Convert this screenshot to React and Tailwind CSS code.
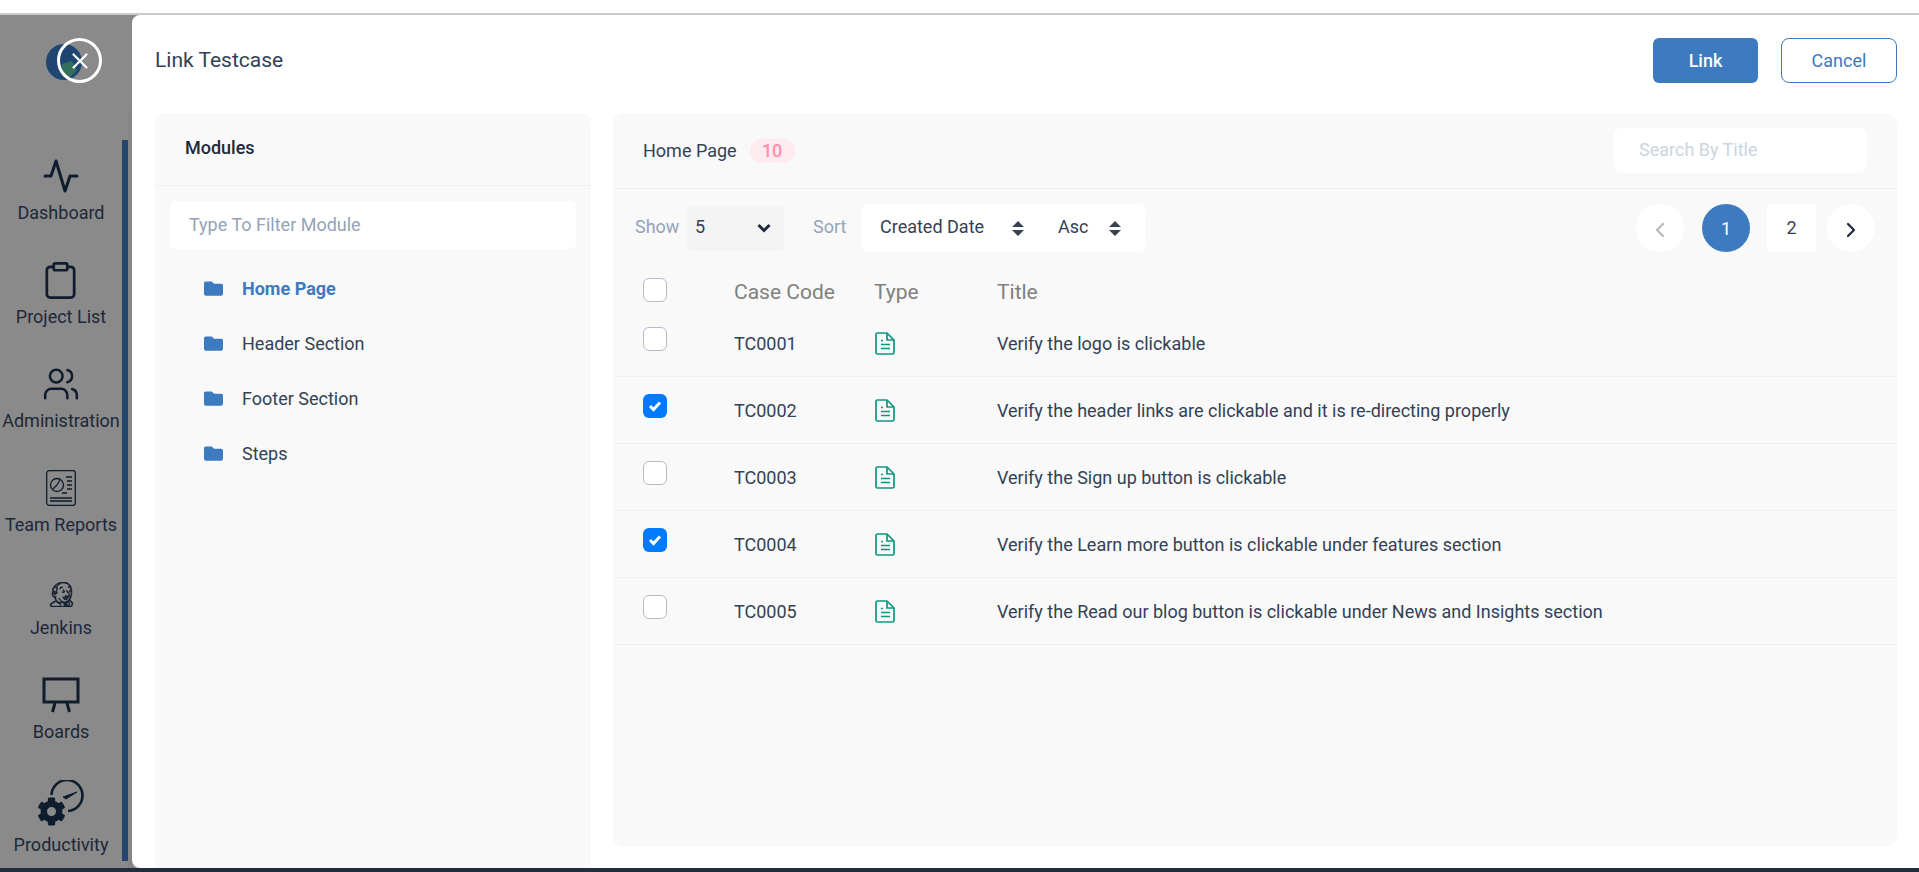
import React from 'react';
import { Clipboard, Users, ChevronLeft, ChevronRight, X } from 'lucide-react';
import { FaFolder, FaCog } from 'react-icons/fa';
import { SiJenkins } from 'react-icons/si';

const PulseIcon = () => (
  <svg width="36" height="34" viewBox="0 0 36 34" fill="none" stroke="#0f1c2e" strokeWidth="3" strokeLinecap="round" strokeLinejoin="round">
    <path d="M2 17h6l5-15 9 30 5-15h7" />
  </svg>
);

const navItems = [
  { label: 'Dashboard', icon: <PulseIcon /> },
  { label: 'Project List', icon: <Clipboard size={41} strokeWidth={1.6} /> },
  { label: 'Administration', icon: <Users size={38} strokeWidth={1.6} /> },
];

const ReportIcon = () => (
  <svg width="30" height="36" viewBox="0 0 30 36" fill="none" stroke="#0f1c2e" strokeWidth="1.3">
    <rect x="0.7" y="0.7" width="28.6" height="34.6" rx="2.5" />
    <circle cx="11" cy="15" r="6.5" />
    <path d="M11 15l3-5M11 15l-4 4" />
    <path d="M20 7h6M21 11h5M21 15h5M21 19h5M21 23h-5M4 28h22M4 31h22" />
  </svg>
);

const BoardIcon = () => (
  <svg width="38" height="36" viewBox="0 0 38 36" fill="none" stroke="#0f1c2e" strokeWidth="3">
    <rect x="2" y="2" width="34" height="23" />
    <path d="M13 26l-2.5 9M25 26l2.5 9" />
  </svg>
);

const ProductivityIcon = () => (
  <div className="relative w-[48px] h-[46px]">
    <svg className="absolute right-0 top-0" width="36" height="34" viewBox="0 0 36 34" fill="none" stroke="#0f1c2e" strokeWidth="2.6">
      <path d="M2.5 15A15.5 15.5 0 1 1 19 31" />
      <path d="M14 17l14-5-11 7z" fill="#0f1c2e" strokeWidth="1" />
    </svg>
    <FaCog className="absolute left-0 bottom-0 text-[#0f1c2e]" size={29} />
  </div>
);

const FileIcon = () => (
  <svg width="20" height="23" viewBox="0 0 20 23" fill="none" stroke="#0f9680" strokeWidth="1.7" strokeLinejoin="round">
    <path d="M2.5 1h9.5L19 8v12.5a1.5 1.5 0 0 1-1.5 1.5h-15A1.5 1.5 0 0 1 1 20.5v-18A1.5 1.5 0 0 1 2.5 1z" />
    <path d="M12 1v7h7M6 8.5h2M6 12.5h9M6 16.5h9" />
  </svg>
);

const SortIcon = () => (
  <svg width="12" height="15" viewBox="0 0 12 15" fill="#374151" className="shrink-0">
    <path d="M6 0l6 6H0zM6 15L0 9h12z" />
  </svg>
);

const rows = [
  { code: 'TC0001', title: 'Verify the logo is clickable', checked: false },
  { code: 'TC0002', title: 'Verify the header links are clickable and it is re-directing properly', checked: true },
  { code: 'TC0003', title: 'Verify the Sign up button is clickable', checked: false },
  { code: 'TC0004', title: 'Verify the Learn more button is clickable under features section', checked: true },
  { code: 'TC0005', title: 'Verify the Read our blog button is clickable under News and Insights section', checked: false },
];

const modules = ['Home Page', 'Header Section', 'Footer Section', 'Steps'];

const Checkbox = ({ checked }) =>
  checked ? (
    <span className="w-[24px] h-[24px] rounded-[6px] bg-[#007bff] flex items-center justify-center">
      <svg width="14" height="12" viewBox="0 0 14 12" fill="none" stroke="white" strokeWidth="3">
        <path d="M2 6l3.5 3.5L12 2.5" />
      </svg>
    </span>
  ) : (
    <span className="w-[24px] h-[24px] rounded-[6px] bg-white border border-[#b4bcc8]" />
  );

export default function App() {
  return (
    <div className="h-screen flex flex-col bg-white overflow-hidden text-[#334155] font-['Roboto',sans-serif] text-[18px]">
      <div className="h-[13px] shrink-0 bg-white" />
      <div className="h-[2px] shrink-0 bg-[#c9c9c9]" />
      <div className="flex-1 min-h-0 flex bg-[#8a8a8a] relative">
        {/* sidebar behind the overlay */}
        <aside className="w-[122px] shrink-0 flex flex-col items-center text-[#1c2838]">
          <div className="h-[143px] shrink-0 flex justify-center pt-[29px]">
            <svg width="36" height="36" viewBox="0 0 36 36" className="translate-x-[3px]">
              <circle cx="18" cy="18" r="18" fill="#1f4670" />
              <path d="M16 20l10-3 5 9-9 9-6-3z" fill="#33705c" />
            </svg>
          </div>
          {navItems.map((item) => (
            <div key={item.label} className="h-[104px] shrink-0 flex flex-col items-center">
              <div className="h-[36px] flex items-center text-[#0f1c2e]">{item.icon}</div>
              <span className="mt-[7px] leading-[24px] whitespace-nowrap">{item.label}</span>
            </div>
          ))}
          <div className="h-[102px] shrink-0 flex flex-col items-center">
            <ReportIcon />
            <span className="mt-[7px] leading-[24px] whitespace-nowrap">Team Reports</span>
          </div>
          <div className="h-[105px] shrink-0 flex flex-col items-center pt-[10px]">
            <SiJenkins size={25} stroke="#0f1c2e" strokeWidth={0.7} className="text-[#0f1c2e]" />
            <span className="mt-[9px] leading-[24px]">Jenkins</span>
          </div>
          <div className="h-[103px] shrink-0 flex flex-col items-center">
            <BoardIcon />
            <span className="mt-[7px] leading-[24px]">Boards</span>
          </div>
          <div className="flex flex-col items-center">
            <ProductivityIcon />
            <span className="mt-[7px] leading-[24px]">Productivity</span>
          </div>
        </aside>
        <div className="w-[6px] shrink-0 mt-[125px] mb-[7px] bg-[#24466f]" />
        <div className="w-[4px] shrink-0 mt-[96px] bg-[#858585]" />

        {/* close button over the logo */}
        <button className="absolute left-[57px] top-[23px] w-[45px] h-[45px] rounded-full border-[3px] border-white flex items-center justify-center text-white">
          <X size={26} strokeWidth={2} />
        </button>

        {/* modal */}
        <main className="flex-1 min-w-0 flex flex-col bg-white rounded-l-[8px] pl-[23px] pr-[22px]">
          <header className="h-[98px] shrink-0 flex items-start justify-between pt-[23px]">
            <h1 className="text-[21px] leading-[45px] font-normal text-[#334155]">Link Testcase</h1>
            <div className="flex gap-[23px]">
              <button className="w-[105px] h-[45px] rounded-[6px] bg-[#3e7abf] text-white font-medium">Link</button>
              <button className="w-[116px] h-[45px] rounded-[8px] border border-[#3e7abf] text-[#3e7abf]">Cancel</button>
            </div>
          </header>

          <div className="flex-1 min-h-0 flex gap-[22px]">
            {/* modules */}
            <section className="w-[436px] shrink-0 bg-[#f9f9f9] rounded-t-[10px]">
              <div className="h-[73px] pb-[3px] flex items-center pl-[30px] border-b border-[#f0f0f0] font-medium text-[#1e293b]">Modules</div>
              <div className="px-[15px] pt-[15px]">
                <input
                  className="w-full h-[48px] rounded-[6px] bg-white pl-[19px] pb-[2px] outline-none placeholder:text-[#94a3b8]"
                  placeholder="Type To Filter Module"
                />
              </div>
              <ul className="mt-[12px] pl-[49px]">
                {modules.map((m, i) => (
                  <li key={m} className={`h-[55px] flex items-center gap-[19px] ${i === 0 ? 'font-bold text-[#3e7abf]' : ''}`}>
                    <FaFolder size={19} className="text-[#3e7abf]" />
                    {m}
                  </li>
                ))}
              </ul>
            </section>

            {/* test cases */}
            <section className="flex-1 min-w-0 mb-[21px] bg-[#f9f9f9] rounded-[10px]">
              <div className="h-[76px] flex items-center justify-between pl-[30px] pr-[30px] border-b border-[#f0f0f0]">
                <div className="flex items-center gap-[13px]">
                  <span>Home Page</span>
                  <span className="w-[45px] h-[24px] rounded-full bg-[#ffeaf0] text-[#ff8fab] font-medium flex items-center justify-center">10</span>
                </div>
                <input
                  className="w-[253px] h-[45px] rounded-[8px] bg-white pl-[25px] pb-[2px] outline-none placeholder:text-[#cbd5e1]"
                  placeholder="Search By Title"
                />
              </div>

              <div className="h-[75px] flex items-start pt-[15px] pl-[22px] pr-[22px] justify-between">
                <div className="flex items-center">
                  <span className="text-[#94a3b8] w-[51px] -mt-[3px]">Show</span>
                  <div className="w-[98px] h-[45px] rounded-[6px] bg-[#f4f4f5] pl-[9px] pr-[13px] flex items-center justify-between">
                    <span className="-mt-[3px]">5</span>
                    <svg width="14" height="10" viewBox="0 0 14 10" fill="none" stroke="#1e293b" strokeWidth="3">
                      <path d="M1.5 2L7 7.5 12.5 2" />
                    </svg>
                  </div>
                  <span className="text-[#94a3b8] ml-[29px] w-[49px] -mt-[3px]">Sort</span>
                  <div className="w-[283px] h-[48px] rounded-[6px] bg-white pl-[18px] flex items-center">
                    <span className="w-[132px] -mt-[3px]">Created Date</span>
                    <SortIcon />
                    <span className="ml-[34px] w-[51px] -mt-[3px]">Asc</span>
                    <SortIcon />
                  </div>
                </div>
                <div className="flex items-center">
                  <button className="w-[48px] h-[48px] rounded-full bg-white text-[#b8b8b8] flex items-center justify-center"><ChevronLeft size={24} strokeWidth={2.2} className="mt-[3px]" /></button>
                  <button className="ml-[18px] w-[48px] h-[48px] rounded-full bg-[#3e7abf] text-white flex items-center justify-center">1</button>
                  <button className="ml-[17px] w-[49px] h-[48px] bg-white flex items-center justify-center pb-[2px]">2</button>
                  <button className="ml-[11px] w-[48px] h-[48px] rounded-full bg-white text-[#1e293b] flex items-center justify-center"><ChevronRight size={24} strokeWidth={2.2} className="mt-[3px]" /></button>
                </div>
              </div>

              <div className="h-[46px] flex items-center pt-[11px] pl-[30px] text-[21px] text-[#808080]">
                <span className="w-[91px] -mt-[6px] flex"><Checkbox /></span>
                <span className="w-[140px]">Case Code</span>
                <span className="w-[123px]">Type</span>
                <span>Title</span>
              </div>
              {rows.map((r) => (
                <div key={r.code} className="h-[67px] flex items-center pl-[30px] border-b border-[#f0f0f0]">
                  <span className="w-[91px] -mt-[8px] flex"><Checkbox checked={r.checked} /></span>
                  <span className="w-[141px]">{r.code}</span>
                  <span className="w-[122px] flex"><FileIcon /></span>
                  <span>{r.title}</span>
                </div>
              ))}
            </section>
          </div>
        </main>
      </div>
      <div className="h-[4px] shrink-0 bg-[#1f2d3d]" />
    </div>
  );
}
